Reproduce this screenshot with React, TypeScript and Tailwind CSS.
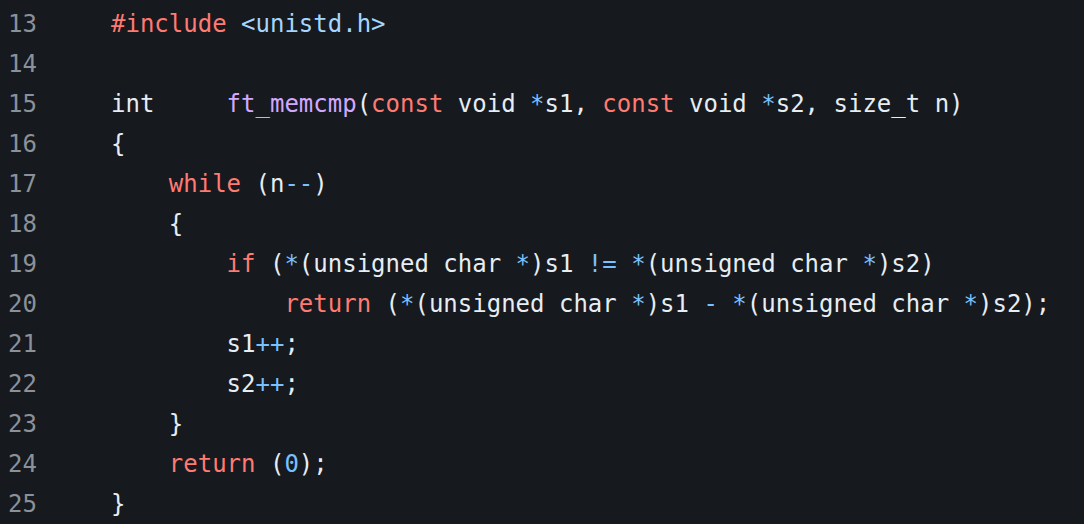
type Tok = [string, string?];

const R = 'text-[#ff7b72]';
const B = 'text-[#79c0ff]';
const S = 'text-[#a5d6ff]';
const P = 'text-[#d2a8ff]';

const LINES: { n: number; toks: Tok[] }[] = [
  { n: 13, toks: [['#include', R], [' '], ['<unistd.h>', S]] },
  { n: 14, toks: [] },
  {
    n: 15,
    toks: [
      ['int     '],
      ['ft_memcmp', P],
      ['('],
      ['const', R],
      [' void '],
      ['*', B],
      ['s1, '],
      ['const', R],
      [' void '],
      ['*', B],
      ['s2, size_t n)'],
    ],
  },
  { n: 16, toks: [['{']] },
  { n: 17, toks: [['    '], ['while', R], [' (n'], ['--', B], [')']] },
  { n: 18, toks: [['    {']] },
  {
    n: 19,
    toks: [
      ['        '],
      ['if', R],
      [' ('],
      ['*', B],
      ['(unsigned char '],
      ['*', B],
      [')s1 '],
      ['!=', B],
      [' '],
      ['*', B],
      ['(unsigned char '],
      ['*', B],
      [')s2)'],
    ],
  },
  {
    n: 20,
    toks: [
      ['            '],
      ['return', R],
      [' ('],
      ['*', B],
      ['(unsigned char '],
      ['*', B],
      [')s1 '],
      ['-', B],
      [' '],
      ['*', B],
      ['(unsigned char '],
      ['*', B],
      [')s2);'],
    ],
  },
  { n: 21, toks: [['        s1'], ['++', B], [';']] },
  { n: 22, toks: [['        s2'], ['++', B], [';']] },
  { n: 23, toks: [['    }']] },
  { n: 24, toks: [['    '], ['return', R], [' ('], ['0', B], [');']] },
  { n: 25, toks: [['}']] },
];

function App() {
  return (
    <div className="w-[1084px] h-[524px] overflow-hidden bg-[#16191e] pt-[4px] font-['DejaVu_Sans_Mono',monospace] text-[24px] leading-[40px]">
      {LINES.map((line) => (
        <div key={line.n} className="flex h-[40px]">
          <span className="w-[29px] ml-[8px] text-[#8b9199]">{line.n}</span>
          <pre className="ml-[74px] font-['DejaVu_Sans_Mono',monospace] text-[#e6edf3] whitespace-pre">
            {line.toks.map((t, i) => (
              <span key={i} className={t[1]}>
                {t[0]}
              </span>
            ))}
          </pre>
        </div>
      ))}
    </div>
  );
}

export default App;
